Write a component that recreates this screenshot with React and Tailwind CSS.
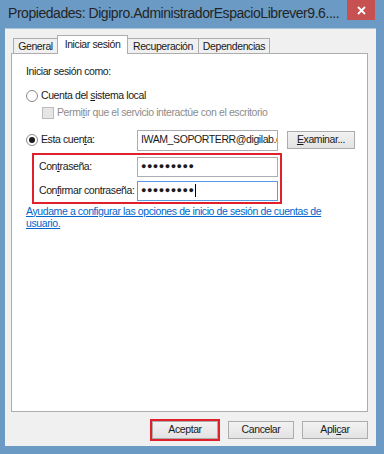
import React from "react";

const font = { fontFamily: '"Liberation Sans", Arial, sans-serif' };

function Radio({ checked }) {
  return (
    <span className="relative inline-flex h-[12px] w-[12px] shrink-0 items-center justify-center rounded-full border border-[#8a8a8a] bg-white">
      {checked && <span className="h-[6px] w-[6px] rounded-full bg-[#1a1a1a]" />}
    </span>
  );
}

function Tab({ label, active, className = "" }) {
  if (active) {
    return (
      <div className={`relative z-10 -mx-[1px] flex h-[19px] items-center justify-center border border-b-0 border-[#adadad] bg-white ${className}`}>
        {label}
      </div>
    );
  }
  return (
    <div className={`mt-[3px] flex h-[16px] items-center justify-center border border-b-0 border-[#adadad] bg-[#f0f0f0] ${className}`}>
      {label}
    </div>
  );
}

function Btn({ children, className = "" }) {
  return (
    <div className={`flex h-[18px] w-[66px] items-center justify-center border border-[#acacac] bg-gradient-to-b from-[#f2f2f2] to-[#e3e3e3] ${className}`}>
      {children}
    </div>
  );
}

export default function App() {
  return (
    <div className="flex h-[454px] w-[384px] flex-col overflow-hidden bg-[#6b9bc4] text-[10.5px] tracking-[-0.4px] text-[#1a1a1a]" style={font}>
      {/* title bar */}
      <div className="flex h-[28px] shrink-0 items-start">
        <div className="min-w-0 overflow-hidden whitespace-nowrap pl-[8px] pt-[5px] text-[14px] leading-[17px] tracking-[-0.45px] text-[#242424]">
          Propiedades: Digipro.AdministradorEspacioLibrever9.6....
        </div>
        <div className="ml-auto mr-[9px] flex h-[20px] w-[28px] shrink-0 items-center justify-center bg-[#c75050]">
          <svg width="9" height="9" viewBox="0 0 9 9">
            <path d="M1 1 L8 8 M8 1 L1 8" stroke="white" strokeWidth="1.8" />
          </svg>
        </div>
      </div>

      {/* client */}
      <div className="ml-[5px] mr-[8px] mb-[8px] flex flex-1 flex-col border-t border-[#a9c4de] bg-[#f0f0f0] pl-[6px] pr-[8px] pt-[6px]">
        <div className="flex h-[19px] items-start pl-[2px]">
          <Tab label="General" className="w-[45px]" />
          <Tab label="Iniciar sesión" active className="w-[71px]" />
          <Tab label="Recuperación" className="w-[72px]" />
          <Tab label="Dependencias" className="-ml-[1px] w-[72px]" />
        </div>

        <div className="-mt-[1px] flex h-[359px] flex-col border border-[#adadad] bg-white pl-[14px] pr-[10px] pt-[11px]">
          <div className="leading-[13px]">Iniciar sesión como:</div>

          <div className="mt-[10px] flex items-center gap-[3px]">
            <Radio />
            <span>Cuenta del <u>s</u>istema local</span>
          </div>
          <div className="mt-[1px] flex items-center gap-[3px] pl-[16px] text-[#8c8c8c]">
            <span className="h-[12px] w-[12px] shrink-0 border border-[#bcbcbc] bg-[#e6e6e6]" />
            <span>Permi<u>t</u>ir que el servicio interactúe con el escritorio</span>
          </div>

          <div className="mt-[9px] flex items-center">
            <div className="flex w-[111px] items-center gap-[3px]">
              <Radio checked />
              <span>Esta cuen<u>t</u>a:</span>
            </div>
            <div className="flex h-[21px] w-[141px] items-center overflow-hidden whitespace-nowrap border border-[#abadb3] bg-white pl-[3px]">
              IWAM_SOPORTERR@digilab.c
            </div>
            <Btn className="ml-[9px] w-[68px]">
              <span><u>E</u>xaminar...</span>
            </Btn>
          </div>

          <div className="ml-[6px] mt-[2px] flex w-[250px] flex-col gap-[4px] border-[2px] border-[#e0202a] pb-[1px] pl-[5px] pt-[2px]">
            <div className="flex items-center">
              <span className="w-[98px] whitespace-nowrap">Con<u>t</u>raseña:</span>
              <div className="flex h-[20px] w-[141px] items-center border border-[#abadb3] bg-white pl-[3px] text-[9px] tracking-[0.5px]">
                ●●●●●●●●●
              </div>
            </div>
            <div className="flex items-center">
              <span className="w-[98px] whitespace-nowrap">Con<u>f</u>irmar contraseña:</span>
              <div className="flex h-[20px] w-[141px] items-center border border-[#569de5] bg-white pl-[3px] text-[9px] tracking-[0.5px]">
                ●●●●●●●●●<span className="ml-[1px] h-[13px] w-[1px] bg-black" />
              </div>
            </div>
          </div>

          <div className="mt-[1px] whitespace-nowrap leading-[12px] text-[#0066cc] underline">
            Ayudame a configurar las opciones de inicio de sesión de cuentas de
            <br />
            usuario.
          </div>
        </div>

        <div className="mt-[7px] flex justify-end gap-[8px]">
          <div className="border-[2px] border-[#e0202a]">
            <Btn className="w-[66px] border-[#8aaed0]">Aceptar</Btn>
          </div>
          <div className="pt-[2px]">
            <Btn>Cancelar</Btn>
          </div>
          <div className="pt-[2px]">
            <Btn>Apli<u>c</u>ar</Btn>
          </div>
        </div>
      </div>
    </div>
  );
}
